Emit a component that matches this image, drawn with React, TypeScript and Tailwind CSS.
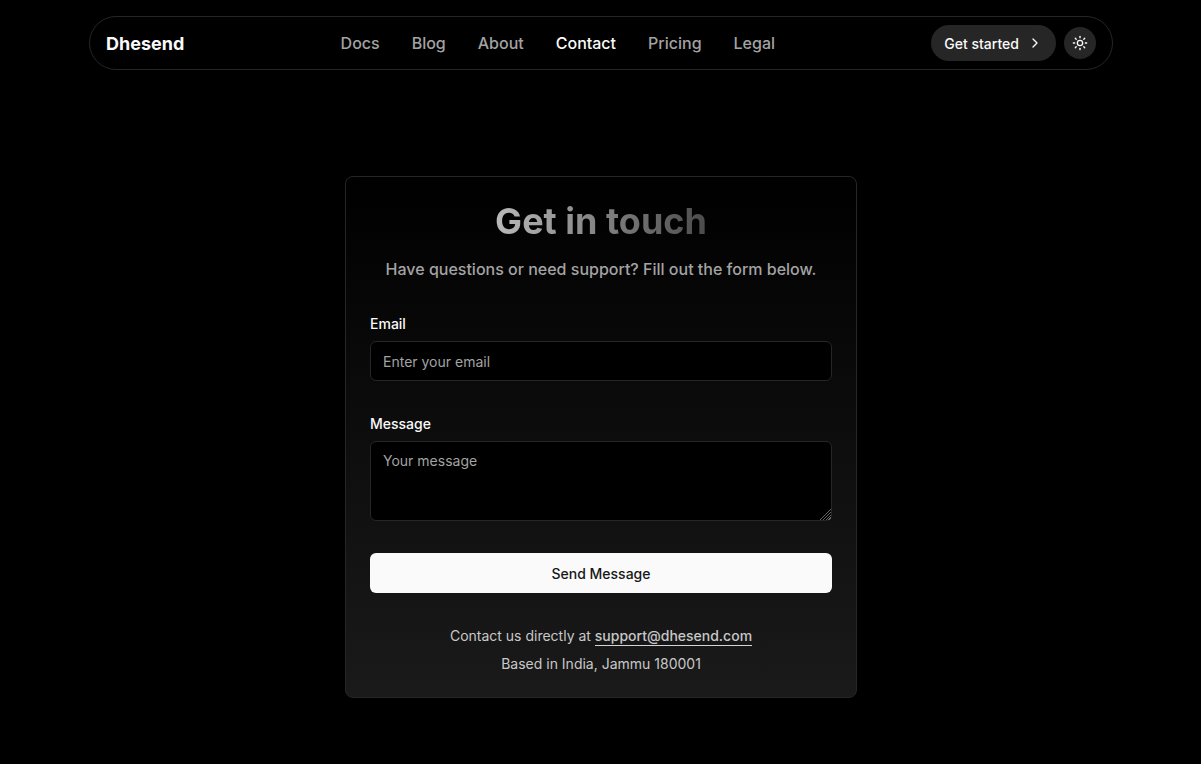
import { ChevronRight, Sun } from "lucide-react";

const links = ["Docs", "Blog", "About", "Contact", "Pricing", "Legal"];

function Header() {
  return (
    <header className="mx-auto flex w-full max-w-5xl items-center justify-between rounded-full border border-[#262626] px-4 py-2">
      <a href="#home" className="pt-0.5 text-lg leading-7 font-bold text-[#fafafa]">
        Dhesend
      </a>
      <nav className="flex items-center gap-8">
        {links.map((name) => (
          <a
            key={name}
            href={"#" + name.toLowerCase()}
            aria-current={name === "Contact" ? "page" : undefined}
            className={
              name === "Contact"
                ? "text-base font-medium text-[#fafafa]"
                : "text-base font-medium text-[#a3a3a3]"
            }
          >
            {name}
          </a>
        ))}
      </nav>
      <div className="flex items-center gap-2">
        <button
          type="button"
          className="flex h-9 items-center gap-2 rounded-full bg-[#262626] px-[13px] text-sm font-medium text-[#fafafa]"
        >
          <span className="pt-0.5">Get started</span>
          <ChevronRight size={16} />
        </button>
        <button
          type="button"
          aria-label="Toggle theme"
          className="flex size-8 items-center justify-center rounded-full bg-[#262626] text-[#fafafa]"
        >
          <Sun size={16} />
        </button>
      </div>
    </header>
  );
}

function ContactCard() {
  return (
    <section className="mx-auto w-full max-w-lg rounded-lg border border-[#262626] bg-linear-to-b/srgb from-black to-[#1a1a1a] px-6 pt-6 pb-[22px]">
      <h1 className="bg-linear-to-r/srgb from-[#fafafa] to-[#0a0a0a] bg-clip-text text-center text-4xl font-bold text-transparent">
        Get in touch
      </h1>
      <p className="mt-4 text-center text-base font-medium text-[#a3a3a3]">
        Have questions or need support? Fill out the form below.
      </p>
      <form className="mt-8 flex flex-col gap-8">
        <div className="flex flex-col gap-1.5">
          <label htmlFor="email" className="text-sm leading-[22px] font-medium text-[#fafafa]">
            Email
          </label>
          <input
            id="email"
            type="email"
            placeholder="Enter your email"
            className="h-10 w-full rounded-md border border-[#262626] bg-black px-3 text-sm text-[#fafafa] placeholder:text-[#a3a3a3]"
          />
        </div>
        <div className="flex flex-col gap-1.5">
          <label htmlFor="message" className="text-sm leading-[22px] font-medium text-[#fafafa]">
            Message
          </label>
          <textarea
            id="message"
            placeholder="Your message"
            className="h-20 w-full rounded-md border border-[#262626] bg-black px-3 py-2 text-sm leading-[22px] text-[#fafafa] placeholder:text-[#a3a3a3] [&::-webkit-resizer]:bg-[linear-gradient(135deg,transparent_13px,#666_13px,#666_14px,transparent_14px,transparent_15px,#666_15px,#666_16px,transparent_16px,transparent_17px,#666_17px,#666_18px,transparent_18px,transparent_19px,#666_19px,#666_20px,transparent_20px)]"
          />
        </div>
        <button
          type="submit"
          className="h-10 w-full rounded-md bg-[#fafafa] pt-0.5 text-sm font-medium text-[#171717]"
        >
          Send Message
        </button>
      </form>
      <div className="mt-8 flex flex-col gap-1.5 text-center text-sm leading-[22px] text-[#c8c8c8]">
        <p>
          Contact us directly at{" "}
          <a
            href="mailto:support@dhesend.com"
            className="border-b border-[#d4d4d4] pb-px font-medium"
          >
            support@dhesend.com
          </a>
        </p>
        <p>Based in India, Jammu 180001</p>
      </div>
    </section>
  );
}

export default function App() {
  return (
    <div className="min-h-screen bg-black pt-4 pr-4 pb-16 pl-[17px] font-['Inter','Liberation_Sans',sans-serif] text-[#fafafa]">
      <Header />
      <main className="pt-[106px]">
        <ContactCard />
      </main>
    </div>
  );
}
